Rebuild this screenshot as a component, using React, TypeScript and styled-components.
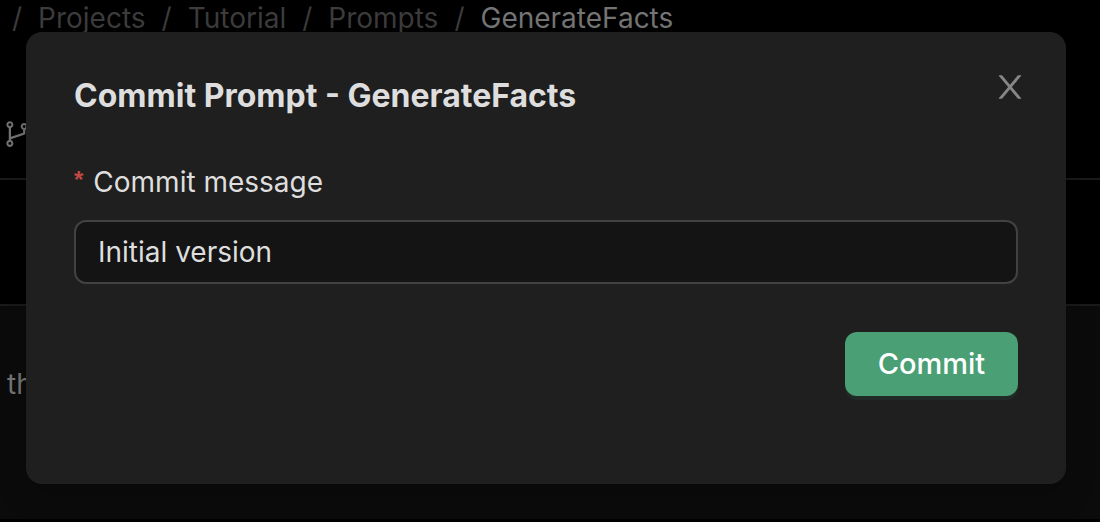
import React, { useState } from "react";
import styled, { createGlobalStyle } from "styled-components";

const GlobalStyle = createGlobalStyle`
  *, *::before, *::after { box-sizing: border-box; }
  html, body, #root { height: 100%; }
  body {
    margin: 0;
    background: #000;
    font-family: Inter, "Liberation Sans", sans-serif;
    font-size: 28px;
    line-height: 44px;
    overflow: hidden;
  }
`;

const Shell = styled.div`
  position: relative;
  display: flex;
  flex-direction: column;
  min-height: 100vh;
`;

const PageHeader = styled.header`
  display: flex;
  flex-direction: column;
  gap: 80px;
  height: 180px;
  padding-left: 3px;
  border-bottom: 2px solid #1a1a1a;
`;

const Crumbs = styled.nav`
  display: flex;
  flex: none;
  height: 40px;
  line-height: 36px;
  padding-left: 9px;
  gap: 16px;
  color: #3c3c3c;
  white-space: nowrap;
`;

const Crumb = styled.a`
  color: inherit;
  text-decoration: none;
`;

const CurrentCrumb = styled.span`
  color: #757575;
`;

const BranchIcon = styled.svg`
  display: block;
  flex: none;
  width: 28px;
  height: 28px;
  fill: #757575;
`;

const Toolbar = styled.div`
  height: 126px;
  border-bottom: 2px solid #1a1a1a;
`;

const Content = styled.main`
  flex: 1;
  margin-bottom: 3px;
  padding: 56px 7px;
  background: #0b0b0b;
  color: #757575;
`;

const Overlay = styled.div`
  position: absolute;
  inset: 0;
  padding: 32px 34px 38px 26px;
`;

const Dialog = styled.section`
  padding: 39px 48px 88px;
  border-radius: 16px;
  background: #1f1f1f;
  color: #dedede;
  box-shadow: 0 12px 32px rgba(0, 0, 0, 0.2);
`;

const DialogHeader = styled.div`
  display: flex;
  justify-content: space-between;
  align-items: flex-start;
  margin-right: -8px;
  margin-bottom: 39px;
`;

const Title = styled.h1`
  margin: 0;
  font-size: 32px;
  line-height: 50px;
  font-weight: 700;
`;

const CloseButton = styled.button`
  display: flex;
  padding: 0;
  border: 0;
  background: none;
  cursor: pointer;

  svg {
    width: 32px;
    height: 32px;
    fill: #868686;
  }
`;

const Form = styled.form`
  display: flex;
  flex-direction: column;
`;

const Label = styled.label`
  display: flex;
  gap: 10px;
  margin-bottom: 16px;
`;

const Required = styled.span`
  color: #c04843;
  font-family: "Liberation Sans", sans-serif;
  font-size: 24px;
  font-weight: 700;
  line-height: 40px;
`;

const TextInput = styled.input`
  width: 100%;
  height: 64px;
  padding: 0 22px;
  border: 2px solid #424242;
  border-radius: 12px;
  outline: none;
  background: #141414;
  color: #dedede;
  font: inherit;
`;

const SubmitButton = styled.button`
  align-self: flex-end;
  min-width: 173px;
  height: 64px;
  margin-top: 48px;
  padding: 0 32px;
  border: 0;
  border-radius: 12px;
  background: #4a9f75;
  box-shadow: 0 4px 0 #202a26;
  color: #fff;
  font: inherit;
  font-size: 29px;
  font-weight: 500;
  cursor: pointer;
`;

export default function App() {
  const [message, setMessage] = useState("Initial version");

  return (
    <>
      <GlobalStyle />
      <Shell>
        <PageHeader>
          <Crumbs aria-label="Breadcrumb">
            <span>/</span>
            <Crumb href="#projects">Projects</Crumb>
            <span>/</span>
            <Crumb href="#tutorial">Tutorial</Crumb>
            <span>/</span>
            <Crumb href="#prompts">Prompts</Crumb>
            <span>/</span>
            <CurrentCrumb>GenerateFacts</CurrentCrumb>
          </Crumbs>
          <BranchIcon viewBox="64 64 896 896" aria-hidden="true">
            <path d="M740 161c-61.8 0-112 50.2-112 112 0 50.1 33.1 92.6 78.5 106.9v95.9L320 602.4V318.1c44.2-15 76-56.9 76-106.1 0-61.8-50.2-112-112-112s-112 50.2-112 112c0 49.2 31.8 91 76 106.1V706c-44.2 15-76 56.9-76 106.1 0 61.8 50.2 112 112 112s112-50.2 112-112c0-49.2-31.8-91-76-106.1v-27.8l423.5-138.7a50.52 50.52 0 0034.9-48.2V378.2c42.9-15.8 73.6-57 73.6-105.2 0-61.8-50.2-112-112-112zm-504 51a48.01 48.01 0 0196 0 48.01 48.01 0 01-96 0zm96 600a48.01 48.01 0 01-96 0 48.01 48.01 0 0196 0zm408-491a48.01 48.01 0 010-96 48.01 48.01 0 010 96z" />
          </BranchIcon>
        </PageHeader>
        <Toolbar />
        <Content>th</Content>
        <Overlay>
          <Dialog role="dialog" aria-modal="true" aria-labelledby="commit-title">
            <DialogHeader>
              <Title id="commit-title">Commit Prompt - GenerateFacts</Title>
              <CloseButton type="button" aria-label="Close">
                <svg viewBox="64 64 896 896" aria-hidden="true">
                  <path d="M563.8 512l262.5-312.9c4.4-5.2.7-13.1-6.1-13.1h-79.8c-4.7 0-9.2 2.1-12.3 5.7L511.6 449.8 295.1 191.7c-3-3.6-7.5-5.7-12.3-5.7H203c-6.8 0-10.5 7.9-6.1 13.1L459.4 512 196.9 824.9A7.95 7.95 0 00203 838h79.8c4.7 0 9.2-2.1 12.3-5.7l216.5-258.1 216.5 258.1c3 3.6 7.5 5.7 12.3 5.7h79.8c6.8 0 10.5-7.9 6.1-13.1L563.8 512z" />
                </svg>
              </CloseButton>
            </DialogHeader>
            <Form onSubmit={(event) => event.preventDefault()}>
              <Label htmlFor="commit-message">
                <Required aria-hidden="true">*</Required>
                Commit message
              </Label>
              <TextInput
                id="commit-message"
                type="text"
                required
                value={message}
                onChange={(event) => setMessage(event.target.value)}
              />
              <SubmitButton type="submit">Commit</SubmitButton>
            </Form>
          </Dialog>
        </Overlay>
      </Shell>
    </>
  );
}
